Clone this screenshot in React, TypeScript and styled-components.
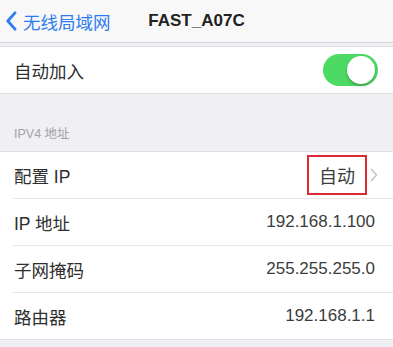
import React from "react";
import styled, { createGlobalStyle } from "styled-components";

const GlobalStyle = createGlobalStyle`
  body {
    margin: 0;
    background: #efeff4;
    font-family: "Liberation Sans", "Noto Sans CJK SC", sans-serif;
  }
`;

const Page = styled.div`
  width: 393px;
  height: 347px;
  overflow: hidden;
  background: #efeff4;
`;

const NavBar = styled.header`
  display: grid;
  grid-template-columns: 1fr auto 1fr;
  align-items: center;
  height: 43px;
  background: #f8f8f8;
  border-bottom: 1px solid #d3d3d8;
  box-sizing: border-box;
`;

const BackButton = styled.div`
  display: flex;
  align-items: center;
  gap: 6px;
  padding-left: 6px;
  color: #2f7cf2;
  font-size: 17.5px;
`;

const Title = styled.h1`
  margin: 0;
  font-size: 17px;
  font-weight: 700;
  color: #222;
`;

const Group = styled.section<{ $gap: number }>`
  margin-top: ${(p) => p.$gap}px;
  background: #fff;
  border-top: 1px solid #dfdfe3;
  border-bottom: 1px solid #dfdfe3;
`;

const SectionHeader = styled.div`
  display: flex;
  align-items: flex-end;
  height: 57px;
  padding: 0 14px 9px;
  box-sizing: border-box;
  font-size: 12.5px;
  color: #a3a3a8;
`;

const Row = styled.div`
  display: flex;
  align-items: center;
  justify-content: space-between;
  height: 47px;
  margin-left: 13px;
  padding: 0 15px 0 1px;
  border-top: 1px solid #e6e6ea;
  box-sizing: border-box;

  &:first-child {
    border-top: 0;
    height: 46px;
  }
`;

const Label = styled.span`
  font-size: 17.5px;
  color: #2e2e2e;
`;

const Value = styled.span<{ $trailing?: boolean }>`
  display: flex;
  align-items: center;
  gap: 3px;
  margin-right: ${(p) => (p.$trailing ? 0 : 3)}px;
  font-size: 17px;
  color: #3c3c3c;
`;

const Highlight = styled.span`
  display: flex;
  align-items: center;
  justify-content: center;
  width: 60px;
  height: 40px;
  box-sizing: border-box;
  border: 2px solid #d92a32;
  font-size: 18px;
  color: #3c3c3c;
`;

const Toggle = styled.div<{ $on: boolean }>`
  position: relative;
  width: 55px;
  height: 32px;
  border-radius: 16px;
  background: ${(p) => (p.$on ? "#4cd964" : "#e5e5ea")};
`;

const Knob = styled.span<{ $on: boolean }>`
  position: absolute;
  top: 2px;
  left: ${(p) => (p.$on ? "24px" : "2px")};
  width: 28px;
  height: 28px;
  border-radius: 50%;
  background: #fff;
  box-shadow: 0 2px 3px rgba(0, 0, 0, 0.25);
`;

const BackChevron = () => (
  <svg width={11} height={20} viewBox="0 0 11 20" fill="none">
    <path d="M9 1.8 1.8 10 9 18.2" stroke="#2f7cf2" strokeWidth="2.8" strokeLinecap="round" strokeLinejoin="round" />
  </svg>
);

const rows = [
  { label: "IP 地址", value: "192.168.1.100" },
  { label: "子网掩码", value: "255.255.255.0" },
  { label: "路由器", value: "192.168.1.1" },
];

export default function App() {
  return (
    <Page>
      <GlobalStyle />
      <NavBar>
        <BackButton>
          <BackChevron />
          无线局域网
        </BackButton>
        <Title>FAST_A07C</Title>
        <span />
      </NavBar>

      <Group $gap={3}>
        <Row>
          <Label>自动加入</Label>
          <Toggle $on>
            <Knob $on />
          </Toggle>
        </Row>
      </Group>

      <SectionHeader>IPV4 地址</SectionHeader>

      <Group $gap={0}>
        <Row>
          <Label>配置 IP</Label>
          <Value $trailing>
            <Highlight>自动</Highlight>
            <svg width={8} height={14} viewBox="0 0 8 14" fill="none">
              <path d="M1.5 1.5 6.5 7l-5 5.5" stroke="#c7c7cc" strokeWidth="1.8" strokeLinecap="round" strokeLinejoin="round" />
            </svg>
          </Value>
        </Row>
        {rows.map((r) => (
          <Row key={r.label}>
            <Label>{r.label}</Label>
            <Value>{r.value}</Value>
          </Row>
        ))}
      </Group>
    </Page>
  );
}
